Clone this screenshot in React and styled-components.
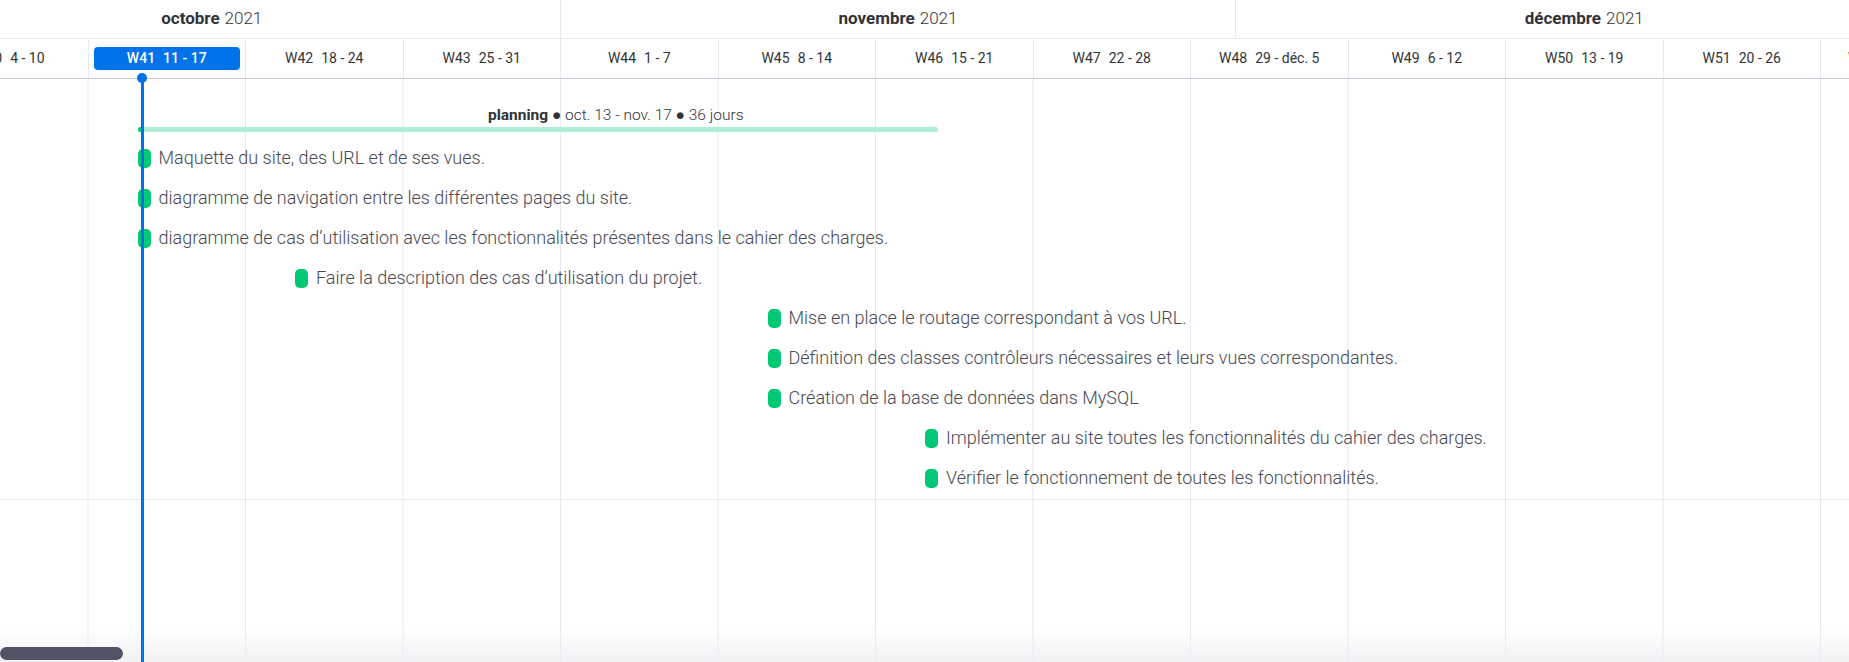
import React from 'react';
import styled, { createGlobalStyle } from 'styled-components';

// timeline scale: one day = 22.5px, W41 (oct. 11) starts at x = 88.5
const DAY = 22.5;
const WEEK = DAY * 7;
const ORIGIN = 88.5;
const xOf = (d) => ORIGIN + d * DAY;

const months = [
  { bold: 'octobre', year: '2021', start: -10, days: 31 },
  { bold: 'novembre', year: '2021', start: 21, days: 30 },
  { bold: 'décembre', year: '2021', start: 51, days: 31 },
];

const weeks = [
  ['W40', '4 - 10'],
  ['W41', '11 - 17'],
  ['W42', '18 - 24'],
  ['W43', '25 - 31'],
  ['W44', '1 - 7'],
  ['W45', '8 - 14'],
  ['W46', '15 - 21'],
  ['W47', '22 - 28'],
  ['W48', '29 - déc. 5'],
  ['W49', '6 - 12'],
  ['W50', '13 - 19'],
  ['W51', '20 - 26'],
  ['W52', '27 - janv. 2'],
];

const tasks = [
  { day: 2, name: 'Maquette du site, des URL et de ses vues.' },
  { day: 2, name: 'diagramme de navigation entre les différentes pages du site.' },
  { day: 2, name: 'diagramme de cas d’utilisation avec les fonctionnalités présentes dans le cahier des charges.' },
  { day: 9, name: 'Faire la description des cas d’utilisation du projet.' },
  { day: 30, name: 'Mise en place le routage correspondant à vos URL.' },
  { day: 30, name: 'Définition des classes contrôleurs nécessaires et leurs vues correspondantes.' },
  { day: 30, name: 'Création de la base de données dans MySQL' },
  { day: 37, name: 'Implémenter au site toutes les fonctionnalités du cahier des charges.' },
  { day: 37, name: 'Vérifier le fonctionnement de toutes les fonctionnalités.' },
];

const TODAY_WEEK = 'W41';
const TODAY_X = 142;

const GlobalStyle = createGlobalStyle`
  html, body {
    margin: 0;
    padding: 0;
    background: #ffffff;
    overflow: hidden;
  }
  body {
    font-family: Roboto, "Noto Sans", "Liberation Sans", sans-serif;
    color: #323338;
  }
`;

const Viewport = styled.div`
  position: relative;
  width: 100vw;
  height: 100vh;
  overflow: hidden;
  display: flex;
  flex-direction: column;
`;

const MonthRow = styled.div`
  display: flex;
  flex-shrink: 0;
  height: 38px;
  margin-left: ${(p) => p.$offset}px;
  border-bottom: 1px solid #e6e9ef;
`;

const MonthCell = styled.div`
  flex: 0 0 ${(p) => p.$width}px;
  display: flex;
  align-items: center;
  justify-content: center;
  padding-bottom: 2px;
  border-right: 1px solid #e6e9ef;
  box-sizing: border-box;
  font-size: 17px;
  font-weight: 300;
  color: #323338;
  white-space: nowrap;

  b {
    font-weight: 700;
    margin-right: 5px;
  }
`;

const WeekRow = styled.div`
  display: flex;
  flex-shrink: 0;
  height: 39px;
  margin-left: ${(p) => p.$offset}px;
  border-bottom: 1px solid #c5c7d4;
`;

const WeekCell = styled.div`
  flex: 0 0 ${WEEK}px;
  box-sizing: border-box;
  border-right: 1px solid #e6e9ef;
  display: flex;
  align-items: center;
  justify-content: center;
  padding: 0 5px;
`;

const WeekLabel = styled.div`
  flex: ${(p) => (p.$today ? '1' : '0 0 auto')};
  height: 23px;
  margin-top: -1px;
  border-radius: 4px;
  display: flex;
  align-items: center;
  justify-content: center;
  gap: 8px;
  font-size: 14px;
  white-space: nowrap;
  font-weight: ${(p) => (p.$today ? 500 : 400)};
  color: ${(p) => (p.$today ? '#ffffff' : '#323338')};
  background: ${(p) => (p.$today ? '#0073ea' : 'transparent')};
`;

const Body = styled.div`
  position: relative;
  flex: 1;
  background-image: linear-gradient(to right, #e6e9ef 1px, transparent 1px);
  background-size: ${WEEK}px 100%;
  background-position: ${ORIGIN - 1}px 0;
`;

const Group = styled.div`
  padding-bottom: 1px;
  border-bottom: 1px solid #e6e9ef;
`;

const Summary = styled.div`
  height: 59px;
  box-sizing: border-box;
  padding-top: 28px;
`;

const SummaryLabel = styled.div`
  padding-left: ${(p) => p.$left}px;
  font-size: 15.5px;
  line-height: 17px;
  font-weight: 300;
  color: #323338;
  white-space: nowrap;

  b {
    font-weight: 700;
  }
`;

const SummaryBar = styled.div`
  margin-top: 3px;
  margin-left: ${(p) => p.$left}px;
  width: ${(p) => p.$width}px;
  height: 5px;
  border-radius: 3px;
  background: #b1ecd4;
  overflow: hidden;

  &::before {
    content: '';
    display: block;
    width: 4px;
    height: 100%;
    background: #00c875;
  }
`;

const TaskRow = styled.div`
  height: 40px;
  display: flex;
  align-items: center;
  gap: 8px;
  padding-left: ${(p) => p.$left}px;
  white-space: nowrap;
`;

const Pill = styled.span`
  flex: 0 0 13px;
  height: 19px;
  border-radius: 5px;
  background: #00c875;
`;

const TaskName = styled.span`
  font-size: 18px;
  line-height: 20px;
  font-weight: 300;
  color: #474852;
`;

const TodayLine = styled.div`
  position: absolute;
  top: 78px;
  bottom: 0;
  left: ${(p) => p.$x - 1.5}px;
  width: 3px;
  background: #0073ea;
  z-index: 3;

  &::before {
    content: '';
    position: absolute;
    top: -5px;
    left: -3.5px;
    width: 10px;
    height: 10px;
    border-radius: 50%;
    background: #0073ea;
  }
`;

const BottomFade = styled.div`
  position: absolute;
  left: 0;
  right: 0;
  bottom: 0;
  height: 34px;
  background: linear-gradient(to bottom, rgba(240, 241, 244, 0), rgba(238, 239, 242, 0.85));
  z-index: 2;
`;

const ScrollThumb = styled.div`
  position: absolute;
  left: 0;
  bottom: 2px;
  width: 123px;
  height: 13px;
  border-radius: 7px;
  background: #525367;
  z-index: 4;
`;

function Timeline() {
  return (
    <Viewport>
      <MonthRow $offset={xOf(months[0].start)}>
        {months.map((m) => (
          <MonthCell key={m.bold} $width={m.days * DAY}>
            <b>{m.bold}</b>
            {m.year}
          </MonthCell>
        ))}
      </MonthRow>

      <WeekRow $offset={ORIGIN - WEEK}>
        {weeks.map(([w, range]) => (
          <WeekCell key={w}>
            <WeekLabel $today={w === TODAY_WEEK}>
              <span>{w}</span>
              <span>{range}</span>
            </WeekLabel>
          </WeekCell>
        ))}
      </WeekRow>

      <Body>
        <Group>
          <Summary>
            <SummaryLabel $left={488}>
              <b>planning</b> ● oct. 13 - nov. 17 ● 36 jours
            </SummaryLabel>
            <SummaryBar $left={xOf(2) + 4.5} $width={36 * DAY - 10} />
          </Summary>
          {tasks.map((t, i) => (
            <TaskRow key={i} $left={xOf(t.day) + 4}>
              <Pill />
              <TaskName>{t.name}</TaskName>
            </TaskRow>
          ))}
        </Group>
      </Body>

      <TodayLine $x={TODAY_X} />
      <BottomFade />
      <ScrollThumb />
    </Viewport>
  );
}

export default function App() {
  return (
    <>
      <GlobalStyle />
      <Timeline />
    </>
  );
}
